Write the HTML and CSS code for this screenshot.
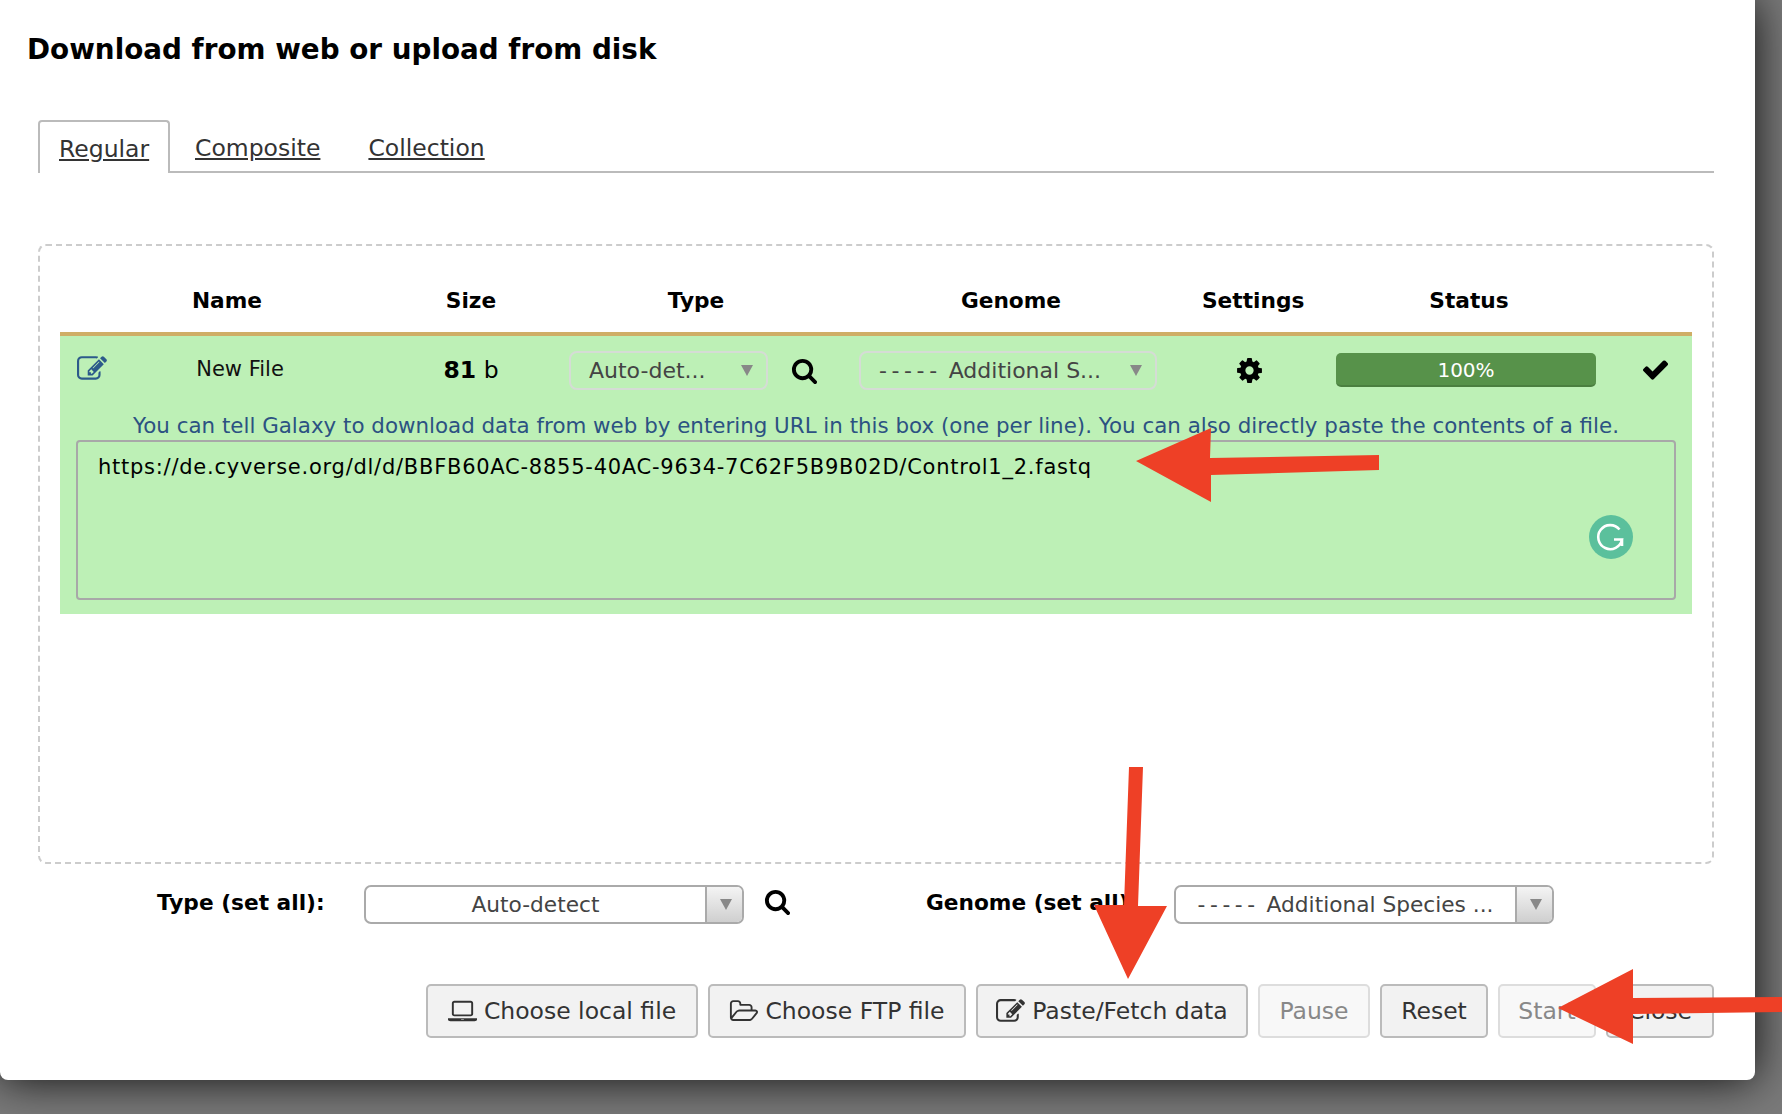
FILE: index.html
```html
<!DOCTYPE html>
<html lang="en">
  <head>
    <meta charset="UTF-8" />
    <title>Download from web or upload from disk</title>
    <link rel="stylesheet" href="styles.css">
  </head>

  <body>
    <svg class="defs" width="0" height="0">
      <symbol id="i-search" viewBox="0 0 1792 1792"><path d="M1216 832q0-185-131.500-316.500t-316.500-131.500-316.500 131.500-131.500 316.500 131.500 316.500 316.500 131.500 316.500-131.500 131.500-316.500zm512 832q0 52-38 90t-90 38q-54 0-90-38l-343-342q-179 124-399 124-143 0-273.500-55.500t-225-150-150-225-55.500-273.500 55.500-273.500 150-225 225-150 273.500-55.500 273.500 55.500 225 150 150 225 55.500 273.500q0 220-124 399l343 343q37 37 37 90z"/></symbol>
      <symbol id="i-edit" viewBox="0 0 1792 1792"><path d="M888 1184l116-116-152-152-116 116v56h96v96h56zm440-720q-16-16-33 1l-350 350q-17 17-1 33t33-1l350-350q17-17 1-33zm80 594v190q0 119-84.500 203.500t-203.500 84.500h-832q-119 0-203.500-84.500t-84.500-203.500v-832q0-119 84.500-203.500t203.500-84.500h832q63 0 117 25 15 7 18 23 3 17-9 29l-49 49q-14 14-32 8-23-6-45-6h-832q-66 0-113 47t-47 113v832q0 66 47 113t113 47h832q66 0 113-47t47-113v-126q0-13 9-22l64-64q15-15 35-7t20 29zm-96-738l288 288-672 672h-288v-288zm444 132l-92 92-288-288 92-92q28-28 68-28t68 28l152 152q28 28 28 68t-28 68z"/></symbol>
    </svg>

    <div class="modal">
      <h1 class="title">Download from web or upload from disk</h1>

      <div class="tabs">
        <a class="tab active">Regular</a>
        <a class="tab">Composite</a>
        <a class="tab">Collection</a>
      </div>

      <div class="box">
        <div class="cols head">
          <div></div>
          <div class="head-name">Name</div>
          <div>Size</div>
          <div>Type</div>
          <div>Genome</div>
          <div>Settings</div>
          <div>Status</div>
          <div></div>
        </div>

        <div class="row">
          <div class="cols top">
            <svg class="ic-edit"><use href="#i-edit" /></svg>
            <div class="file-name">New File</div>
            <div class="file-size"><b>81</b> b</div>
            <div class="type-cell">
              <div class="pick pick-type">Auto-det...<span class="caret"></span></div>
              <svg class="ic-search"><use href="#i-search" /></svg>
            </div>
            <div class="pick pick-genome"><span class="dashes">-----</span> Additional S...<span class="caret"></span></div>
            <svg class="ic-cog" viewBox="0 0 1792 1792"><path d="M1152 896q0-106-75-181t-181-75-181 75-75 181 75 181 181 75 181-75 75-181zm512-109v222q0 12-8 23t-20 13l-185 28q-19 54-39 91 35 50 107 138 10 12 10 25t-9 23q-27 37-99 108t-94 71q-12 0-26-9l-138-108q-44 23-91 38-16 136-29 186-7 28-36 28h-222q-14 0-24.500-8.500t-11.500-21.500l-28-184q-49-16-90-37l-141 107q-10 9-25 9-14 0-25-11-126-114-165-168-7-10-7-23 0-12 8-23 15-21 51-66.500t54-70.500q-27-50-41-99l-183-27q-13-2-21-12.500t-8-23.500v-222q0-12 8-23t19-13l186-28q14-46 39-92-40-57-107-138-10-12-10-24 0-10 9-23 26-36 98.500-107.500t94.500-71.500q13 0 26 10l138 107q44-23 91-38 16-136 29-186 7-28 36-28h222q14 0 24.500 8.500t11.500 21.500l28 184q49 16 90 37l142-107q9-9 24-9 13 0 25 10 129 119 165 170 7 8 7 22 0 12-8 23-15 21-51 66.500t-54 70.500q26 50 41 98l183 28q13 2 21 12.500t8 23.500z"/></svg>
            <div class="bar">100%</div>
            <svg class="ic-check" viewBox="0 0 1792 1792"><path d="M1671 566q0 40-28 68l-724 724-136 136q-28 28-68 28t-68-28l-136-136-362-362q-28-28-28-68t28-68l136-136q28-28 68-28t68 28l294 295 656-657q28-28 68-28t68 28l136 136q28 28 28 68z"/></svg>
          </div>
          <div class="hint">You can tell Galaxy to download data from web by entering URL in this box (one per line). You can also directly paste the contents of a file.</div>
          <div class="paste">
            https://de.cyverse.org/dl/d/BBFB60AC-8855-40AC-9634-7C62F5B9B02D/Control1_2.fastq
            <svg class="grammarly" viewBox="0 0 44 44">
              <circle cx="22" cy="22" r="22" fill="#5bc09c" />
              <path d="M30.500 14.500A12 12 0 1 0 33 24.500H25M33 24.500V31" fill="none" stroke="#fff" stroke-width="2.600" />
            </svg>
          </div>
        </div>
      </div>

      <div class="set-all">
        <div class="set-label set-type">Type (set all):</div>
        <div class="drop drop-type"><span class="drop-text">Auto-detect</span><span class="drop-btn"><span class="caret"></span></span></div>
        <svg class="ic-search set-search"><use href="#i-search" /></svg>
        <div class="set-label set-genome">Genome (set all):</div>
        <div class="drop drop-genome"><span class="drop-text"><span class="dashes">-----</span> Additional Species ...</span><span class="drop-btn"><span class="caret"></span></span></div>
      </div>

      <div class="buttons">
        <div class="btn btn-local">
          <svg class="ic-laptop" viewBox="0 0 1920 1792"><path d="M416 1216q-66 0-113-47t-47-113v-704q0-66 47-113t113-47h1088q66 0 113 47t47 113v704q0 66-47 113t-113 47h-1088zm-32-864v704q0 13 9.500 22.500t22.500 9.500h1088q13 0 22.500-9.500t9.500-22.500v-704q0-13-9.500-22.500t-22.500-9.500h-1088q-13 0-22.500 9.500t-9.500 22.500zm1376 992h160v96q0 40-47 68t-113 28h-1600q-66 0-113-28t-47-68v-96h1760zm-720 96q16 0 16-16t-16-16h-160q-16 0-16 16t16 16h160z"/></svg>
          Choose local file
        </div>
        <div class="btn btn-ftp">
          <svg class="ic-folder" viewBox="0 0 1973 1792"><path d="M1845 931q0-35-53-35h-1088q-40 0-85.500 21.500t-71.500 52.500l-294 363q-18 24-18 40 0 35 53 35h1088q40 0 86-22t71-53l294-363q18-22 18-39zm-1141-163h768v-160q0-40-28-68t-68-28h-576q-40 0-68-28t-28-68v-64q0-40-28-68t-68-28h-320q-40 0-68 28t-28 68v853l256-315q44-53 116-87.500t140-34.500zm1269 163q0 62-46 120l-295 363q-43 53-116 87.500t-140 34.500h-1088q-92 0-158-66t-66-158v-960q0-92 66-158t158-66h320q92 0 158 66t66 158v32h544q92 0 158 66t66 158v160h192q54 0 99 24.500t67 70.500q15 32 15 68z"/></svg>
          Choose FTP file
        </div>
        <div class="btn btn-paste">
          <svg class="ic-btn-edit"><use href="#i-edit" /></svg>
          Paste/Fetch data
        </div>
        <div class="btn btn-pause off">Pause</div>
        <div class="btn btn-reset">Reset</div>
        <div class="btn btn-start off">Start</div>
        <div class="btn btn-close">Close</div>
      </div>
    </div>

    <!-- red arrows drawn over the screenshot -->
    <svg class="arrows" width="1782" height="1114" viewBox="0 0 1782 1114">
      <path d="M1136 461L1211 428L1210 458L1379 455L1379 470L1211 475L1211 502Z" fill="#ee4026" />
      <path d="M1129 767L1143 767L1138 906L1167 906L1128 979L1094 905L1124 905Z" fill="#ee4026" />
      <path d="M1558 1008L1633 969L1633 998L1782 997L1782 1012L1633 1014L1633 1044Z" fill="#ee4026" />
    </svg>
  </body>
</html>
```

FILE: styles.css
```css
body {
  margin: 0;
  width: 1782px;
  height: 1114px;
  overflow: hidden;
  position: relative;
  background: #7a7a7a;
  font-family: "DejaVu Sans", sans-serif;
  color: #333;
}

.defs {
  position: absolute;
}

.modal {
  width: 1755px;
  height: 1080px;
  box-sizing: border-box;
  background: white;
  border-radius: 0 0 8px 8px;
  box-shadow: 0 0 46px rgba(0, 0, 0, 0.9);
  padding: 31px 41px 0 38px;
}

.title {
  margin: 0 0 0 -11px;
  font-size: 27.800px;
  line-height: 38px;
  font-weight: bold;
  color: #000;
}

.tabs {
  display: flex;
  margin-top: 51px;
  height: 53px;
  box-sizing: border-box;
  border-bottom: 2px solid #bbb;
  font-size: 23.500px;
}

.tab {
  padding: 14px 23px 0 25px;
  text-decoration: underline;
  color: #333;
}

.tab.active {
  width: 132px;
  box-sizing: border-box;
  height: 53px;
  padding-top: 13px;
  padding-left: 19px;
  background: white;
  border: 2px solid #bbb;
  border-bottom: none;
  border-radius: 4px 4px 0 0;
}

.box {
  margin-top: 71px;
  height: 620px;
  box-sizing: border-box;
  border: 2px dashed #ccc;
  border-radius: 8px;
  padding: 0 20px;
}

.cols {
  display: grid;
  grid-template-columns: 50px 260px 202px 248px 382px 94px 346px 1fr;
  align-items: center;
}

.head {
  height: 86px;
  padding-top: 22px;
  box-sizing: border-box;
  font-size: 21.700px;
  font-weight: bold;
  color: #000;
  text-align: center;
}

.head-name {
  padding-right: 26px;
}

.row {
  height: 282px;
  box-sizing: border-box;
  background: #bdf0b6;
  border-top: 4px solid #cfae66;
}

.top {
  height: 68px;
}

.ic-edit {
  width: 30px;
  height: 30px;
  margin-left: 17px;
  margin-top: -2px;
  fill: #2c5a8a;
}

.file-name {
  font-size: 21px;
  color: #111;
  text-align: center;
  margin-top: -2px;
}

.file-size {
  font-size: 23.500px;
  color: #000;
  text-align: center;
}

.type-cell {
  display: flex;
  align-items: center;
  margin-left: -3px;
}

.pick {
  position: relative;
  height: 39px;
  box-sizing: border-box;
  border: 2px solid #d5dcd5;
  border-radius: 8px;
  padding-left: 18px;
  line-height: 35px;
  font-size: 22px;
  color: #444;
  white-space: nowrap;
}

.pick-type {
  width: 199px;
}

.pick-genome {
  width: 298px;
  justify-self: center;
  margin-left: -6px;
}

.dashes {
  letter-spacing: 4.600px;
}

.caret {
  position: absolute;
  right: 13px;
  top: 12px;
  border-left: 6px solid transparent;
  border-right: 6px solid transparent;
  border-top: 11px solid #888;
}

.ic-search {
  width: 27px;
  height: 27px;
  margin-left: 23px;
  fill: #000;
}

.ic-cog {
  width: 29px;
  height: 29px;
  justify-self: center;
  fill: #000;
}

.bar {
  width: 260px;
  justify-self: center;
  margin-left: -6px;
  height: 34px;
  box-sizing: border-box;
  background: #57924a;
  border-bottom: 2px solid #4b7f40;
  border-radius: 5px;
  color: white;
  font-size: 20px;
  line-height: 34px;
  text-align: center;
}

.ic-check {
  width: 29px;
  height: 29px;
  margin-left: -1px;
  margin-top: -2px;
  fill: #000;
}

.hint {
  margin-top: 8px;
  font-size: 21.400px;
  line-height: 28px;
  color: #2c5282;
  text-align: center;
  white-space: nowrap;
}

.paste {
  position: relative;
  margin: 0 16px;
  height: 160px;
  box-sizing: border-box;
  border: 2px solid #a8a8a8;
  border-radius: 4px;
  padding: 13px 20px;
  font-size: 21px;
  letter-spacing: 0.750px;
  color: #000;
}

.grammarly {
  position: absolute;
  right: 41px;
  bottom: 39px;
  width: 44px;
  height: 44px;
}

.set-all {
  display: flex;
  align-items: center;
  margin-top: 20px;
  height: 40px;
}

.set-label {
  font-size: 21.700px;
  font-weight: bold;
  color: #000;
  white-space: nowrap;
  margin-top: -4px;
}

.set-type {
  margin-left: 119px;
  width: 207px;
}

.set-genome {
  width: 248px;
  margin-left: 135px;
}

.set-search {
  margin-left: 20px;
  margin-top: -6px;
}

.drop {
  display: flex;
  height: 39px;
  box-sizing: border-box;
  border: 2px solid #aaa;
  border-radius: 7px;
  font-size: 21.700px;
  line-height: 35px;
  color: #444;
  overflow: hidden;
}

.drop-type {
  width: 380px;
}

.drop-genome {
  width: 380px;
}

.drop-text {
  flex: 1;
  text-align: center;
  white-space: nowrap;
}

.drop-btn {
  position: relative;
  width: 35px;
  border-left: 2px solid #aaa;
  background: linear-gradient(#f4f4f4, #cfcfcf);
}

.drop-btn .caret {
  right: 10px;
  top: 12px;
}

.buttons {
  display: flex;
  justify-content: flex-end;
  gap: 10px;
  margin-top: 60px;
}

.btn {
  display: flex;
  align-items: center;
  justify-content: center;
  gap: 7px;
  height: 54px;
  box-sizing: border-box;
  background: #f2f2f2;
  border: 2px solid #bbb;
  border-radius: 5px;
  font-size: 23.500px;
  color: #333;
  white-space: nowrap;
}

.btn.off {
  background: #f8f8f8;
  border-color: #ddd;
  color: #888;
}

.btn-local { width: 272px; }
.btn-ftp { width: 258px; }
.btn-paste { width: 272px; }
.btn-pause { width: 112px; }
.btn-reset { width: 108px; }
.btn-start { width: 98px; }
.btn-close { width: 108px; }

.ic-laptop,
.ic-folder,
.ic-btn-edit {
  width: 29px;
  height: 29px;
  fill: #333;
  flex: none;
}

.arrows {
  position: absolute;
  left: 0;
  top: 0;
}
```
